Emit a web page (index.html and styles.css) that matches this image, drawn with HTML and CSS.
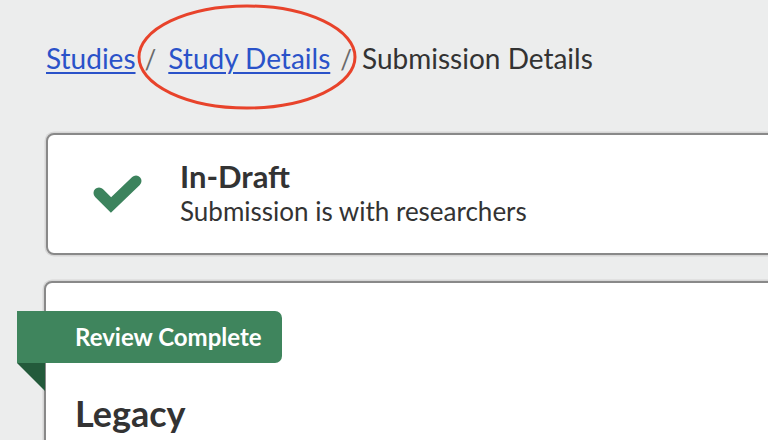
FILE: index.html
```html
<!DOCTYPE html>
<html>
<head>
<meta charset="utf-8">
<link rel="stylesheet" href="styles.css">
</head>
<body>
<div class="page">
  <nav class="crumbs">
    <a class="link" href="#">Studies</a>
    <span class="sep">/</span>
    <a class="link" href="#">Study Details</a>
    <span class="sep sep2">/</span>
    <span class="current">Submission Details</span>
    <svg class="circle" width="222" height="108" viewBox="0 0 222 108">
      <ellipse cx="111" cy="54" rx="108" ry="51" fill="none" stroke="#e8432b" stroke-width="3"/>
    </svg>
  </nav>

  <section class="card status">
    <svg class="check" width="56" height="44" viewBox="0 0 56 44">
      <polyline points="8,20 20,32 45,8" fill="none" stroke="#3c835d" stroke-width="11" stroke-linecap="round" stroke-linejoin="miter"/>
    </svg>
    <div class="status-text">
      <div class="status-title">In-Draft</div>
      <div class="status-sub">Submission is with researchers</div>
    </div>
  </section>

  <section class="card review">
    <div class="ribbon">Review Complete</div>
    <h1 class="legacy">Legacy</h1>
  </section>
</div>
</body>
</html>
```

FILE: styles.css
```css
html, body {
  margin: 0;
  padding: 0;
  background: #eceded;
  overflow: hidden;
  width: 768px;
  height: 440px;
}
.page {
  font-family: Lato, "Noto Sans", sans-serif;
  color: #333333;
  padding: 38px 0 0 46px;
}
.crumbs {
  position: relative;
  font-size: 28px;
  line-height: 40px;
  height: 40px;
  display: flex;
  align-items: baseline;
  white-space: nowrap;
}
.link {
  color: #2a52c9;
  text-decoration: underline;
  text-decoration-thickness: 2px;
  text-underline-offset: 3px;
}
.sep {
  color: #6a6a6a;
  margin: 0 12px 0 9px;
  font-size: 26px;
}
.sep2 {
  margin: 0 10px 0 10px;
}
.current {
  color: #333333;
}
.circle {
  position: absolute;
  left: 90px;
  top: -35px;
}
.card {
  background: #ffffff;
  border: 2px solid #898989;
  border-radius: 8px;
  box-shadow: 0 0 0 1.5px #d6d6d6;
  width: 800px;
  box-sizing: border-box;
}
.status {
  margin-top: 55px;
  height: 122px;
  display: flex;
  align-items: center;
  padding-left: 43px;
}
.check {
  margin-right: 33px;
  margin-top: 2px;
}
.status-title {
  font-weight: 700;
  font-size: 31px;
  line-height: 34px;
}
.status-sub {
  font-size: 26px;
  line-height: 36px;
}
.review {
  margin-top: 26px;
  margin-left: -2px;
  height: 200px;
  position: relative;
  padding-top: 28px;
}
.ribbon {
  position: relative;
  margin-left: -29px;
  width: 265px;
  height: 52px;
  box-sizing: border-box;
  background: #3f855d;
  color: #ffffff;
  font-weight: 700;
  font-size: 24px;
  line-height: 52px;
  padding-left: 58px;
  border-radius: 0 7px 7px 0;
}
.ribbon::after {
  content: "";
  position: absolute;
  left: 0;
  top: 52px;
  width: 0;
  height: 0;
  border-top: 28px solid #235a3b;
  border-left: 28px solid transparent;
}
.legacy {
  margin: 30px 0 0 29px;
  font-size: 36px;
  font-weight: 700;
  line-height: 40px;
}
```
